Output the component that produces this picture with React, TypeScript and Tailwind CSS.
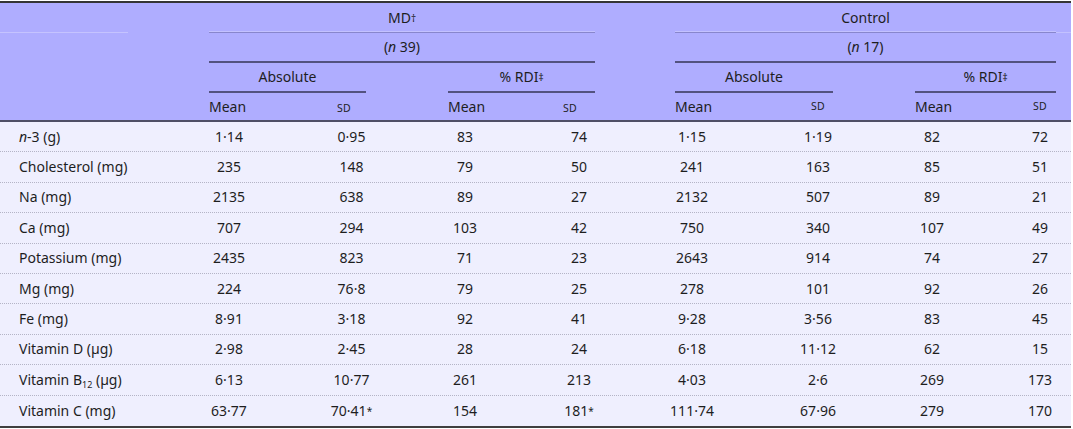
import React from "react";

const GRID =
  "grid grid-cols-[209px_40px_88px_29px_82px_34px_81px_32px_80px_34px_97px_24px_3px_82px_34px_77px_28px_2px_15px]";

type Row = { label: React.ReactNode; v: string[] };

const rows: Row[] = [
  { label: <><i>n</i>-3 (g)</>, v: ["1·14", "0·95", "83", "74", "1·15", "1·19", "82", "72"] },
  { label: "Cholesterol (mg)", v: ["235", "148", "79", "50", "241", "163", "85", "51"] },
  { label: "Na (mg)", v: ["2135", "638", "89", "27", "2132", "507", "89", "21"] },
  { label: "Ca (mg)", v: ["707", "294", "103", "42", "750", "340", "107", "49"] },
  { label: "Potassium (mg)", v: ["2435", "823", "71", "23", "2643", "914", "74", "27"] },
  { label: "Mg (mg)", v: ["224", "76·8", "79", "25", "278", "101", "92", "26"] },
  { label: "Fe (mg)", v: ["8·91", "3·18", "92", "41", "9·28", "3·56", "83", "45"] },
  { label: "Vitamin D (µg)", v: ["2·98", "2·45", "28", "24", "6·18", "11·12", "62", "15"] },
  {
    label: (
      <>
        Vitamin B<span className="text-[9px] leading-none relative top-[3px]">12</span> (µg)
      </>
    ),
    v: ["6·13", "10·77", "261", "213", "4·03", "2·6", "269", "173"],
  },
  { label: "Vitamin C (mg)", v: ["63·77", "70·41*", "154", "181*", "111·74", "67·96", "279", "170"] },
];

const colStarts = [
  "col-start-2",
  "col-start-4",
  "col-start-6",
  "col-start-8",
  "col-start-10",
  "col-start-12",
  "col-start-15",
  "col-start-17",
];

function Val({ s }: { s: string }) {
  if (s.endsWith("*")) {
    return (
      <>
        {s.slice(0, -1)}
        <sup className="text-[10px] leading-none relative top-[-1px]">*</sup>
      </>
    );
  }
  return <>{s}</>;
}

function SD() {
  return <span className="text-[10.5px] tracking-[0.3px]">SD</span>;
}

export default function App() {
  return (
    <div
      className="w-[1071px] mt-[1px] text-[14px] text-[#1e1e1e] leading-none"
      style={{ fontFamily: '"Noto Sans", "Open Sans", sans-serif' }}
    >
      {/* header */}
      <div className="bg-[#afadff] border-t-2 border-[#353535]">
        {/* row 1 */}
        <div className={`${GRID} h-[30px]`}>
          <div className="col-start-1 h-full flex items-end">
            <div className="w-[128px] border-b border-[#c5c3ff]" />
          </div>
          <div className="col-start-2 col-span-7 h-full flex items-center justify-center border-b border-[#8886cc] shadow-[inset_0_-1px_0_#c3c1ff]">
            <span>
              MD<sup className="text-[10px] relative top-[-1px]">†</sup>
            </span>
          </div>
          <div className="col-start-10 col-span-9 h-full flex items-center justify-center border-b border-[#8886cc] shadow-[inset_0_-1px_0_#c3c1ff]">
            Control
          </div>
          <div className="col-start-19 h-full border-b border-[#c3c1ff]" />
        </div>
        {/* row 2 */}
        <div className={`${GRID} h-[30px]`}>
          <div className="col-start-2 col-span-7 h-full flex items-center justify-center border-b-2 border-[#53527f]">
            <span>
              (<i>n</i> 39)
            </span>
          </div>
          <div className="col-start-10 col-span-9 h-full flex items-center justify-center border-b-2 border-[#53527f]">
            <span>
              (<i>n</i> 17)
            </span>
          </div>
        </div>
        {/* row 3 */}
        <div className={`${GRID} h-[30px]`}>
          <div className="col-start-2 col-span-3 h-full flex items-center justify-center border-b-2 border-[#53527f]">
            Absolute
          </div>
          <div className="col-start-6 col-span-3 h-full flex items-center justify-center border-b-2 border-[#53527f]">
            <span>
              % RDI<sup className="text-[10px] relative top-[-1px]">‡</sup>
            </span>
          </div>
          <div className="col-start-10 col-span-4 h-full flex items-center justify-center border-b-2 border-[#53527f]">
            Absolute
          </div>
          <div className="col-start-15 col-span-4 h-full flex items-center justify-center border-b-2 border-[#53527f]">
            <span>
              % RDI<sup className="text-[10px] relative top-[-1px]">‡</sup>
            </span>
          </div>
        </div>
        {/* row 4 */}
        <div className={`${GRID} h-[29px] border-b-2 border-[#4f4f66] items-center`}>
          <div className="col-start-2 whitespace-nowrap">Mean</div>
          <div className="col-start-4 whitespace-nowrap">
            <SD />
          </div>
          <div className="col-start-6 whitespace-nowrap">Mean</div>
          <div className="col-start-8 whitespace-nowrap">
            <SD />
          </div>
          <div className="col-start-10 whitespace-nowrap">Mean</div>
          <div className="col-start-12 flex justify-center">
            <SD />
          </div>
          <div className="col-start-15 whitespace-nowrap">Mean</div>
          <div className="col-start-17 flex justify-center">
            <SD />
          </div>
        </div>
      </div>
      {/* body */}
      <div className="bg-[#efeffe] border-b-2 border-[#3f3f3f]">
        {rows.map((r, i) => (
          <div
            key={i}
            className={`${GRID} h-[30.4px] items-center ${
              i < rows.length - 1 ? "border-b border-dotted border-[#b4b4c6]" : ""
            }`}
          >
            <div className="col-start-1 pl-[19px] whitespace-nowrap">{r.label}</div>
            {r.v.map((s, j) => (
              <div key={j} className={`${colStarts[j]} flex justify-center whitespace-nowrap`}>
                <span>
                  <Val s={s} />
                </span>
              </div>
            ))}
          </div>
        ))}
      </div>
    </div>
  );
}
